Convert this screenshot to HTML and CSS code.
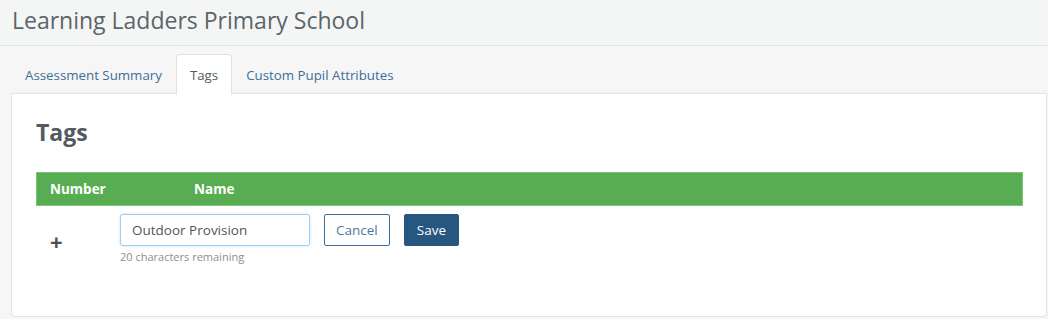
FILE: index.html
```html
<!DOCTYPE html>
<html lang="en">
<head>
  <meta charset="UTF-8" />
  <title>Tags</title>
  <link rel="stylesheet" href="styles.css">
</head>
<body>

  <div class="cabecera">
    <h1>Learning Ladders Primary School</h1>
  </div>

  <div class="pagina">
    <ul class="pestanas">
      <li><a href="#">Assessment Summary</a></li>
      <li class="activa"><a href="#">Tags</a></li>
      <li><a href="#">Custom Pupil Attributes</a></li>
    </ul>

    <div class="panel">
      <h2>Tags</h2>

      <div class="tabla-cabecera">
        <span class="col-numero">Number</span>
        <span class="col-nombre">Name</span>
      </div>

      <div class="fila">
        <span class="mas">+</span>
        <div class="campo">
          <input type="text" value="Outdoor Provision">
          <small>20 characters remaining</small>
        </div>
        <button class="btn-cancelar">Cancel</button>
        <button class="btn-guardar">Save</button>
      </div>
    </div>
  </div>

</body>
</html>
```

FILE: styles.css
```css
body {
  margin: 0;
  font-family: 'Open Sans', sans-serif;
  background-color: #f6f6f6;
  color: #555e63;
}

.cabecera {
  background-color: #f4f6f5;
  border-bottom: 1px solid #e3e8e6;
  height: 45px;
  padding: 0 12px;
}

.cabecera h1 {
  margin: 0;
  font-size: 23px;
  font-weight: 400;
  line-height: 40px;
  color: #5b6569;
}

.pagina {
  padding: 8px 1px 2px 11px;
}

.pestanas {
  list-style: none;
  margin: 0;
  padding: 0;
  display: flex;
  height: 40px;
}

.pestanas li a {
  display: block;
  padding: 0 13px;
  line-height: 40px;
  font-size: 13.3px;
  color: #3c6e98;
  text-decoration: none;
  border: 1px solid transparent;
  border-bottom: none;
  border-radius: 4px 4px 0 0;
}

.pestanas li.activa a {
  background-color: white;
  border-color: #e2e2e2;
  color: #555e63;
  height: 40px;
  position: relative;
  z-index: 1;
}

.panel {
  background-color: white;
  border: 1px solid #e2e2e2;
  border-radius: 0 0 4px 4px;
  margin-top: -1px;
  height: 222px;
  padding: 0 23px 0 24px;
}

.panel h2 {
  margin: 0;
  padding-top: 23px;
  font-size: 23px;
  font-weight: 700;
  line-height: 30px;
  color: #505a60;
}

.tabla-cabecera {
  margin-top: 25px;
  background-color: #58ad52;
  border: 1px solid #7cc477;
  height: 32px;
  display: flex;
  align-items: center;
  color: white;
  font-size: 13.5px;
  font-weight: 700;
}

.col-numero {
  width: 144px;
  padding-left: 13px;
}

.fila {
  display: flex;
  align-items: flex-start;
  padding-top: 8px;
}

.mas {
  box-sizing: border-box;
  width: 84px;
  padding-left: 14px;
  margin-top: 13px;
  font-size: 22px;
  font-weight: 700;
  line-height: 28px;
  color: #4b5257;
}

.campo {
  display: flex;
  flex-direction: column;
}

.campo input {
  width: 190px;
  height: 32px;
  box-sizing: border-box;
  padding: 0 11px;
  font-family: 'Open Sans', sans-serif;
  font-size: 13.5px;
  color: #555;
  border: 1px solid #9fcdee;
  border-radius: 3px;
  box-shadow: 0 0 3px rgba(102, 175, 233, 0.35);
  outline: none;
}

.campo small {
  margin-top: 3px;
  font-size: 11px;
  color: #8a8f92;
}

button {
  height: 32px;
  padding: 0 11px;
  font-family: 'Open Sans', sans-serif;
  font-size: 13.5px;
  border-radius: 2px;
  cursor: pointer;
}

.btn-cancelar {
  margin-left: 14px;
  background-color: white;
  color: #4b79a4;
  border: 1px solid #3f6f9c;
}

.btn-guardar {
  margin-left: 14px;
  background-color: #275681;
  color: white;
  border: 1px solid #275681;
  padding: 0 12px;
}
```
